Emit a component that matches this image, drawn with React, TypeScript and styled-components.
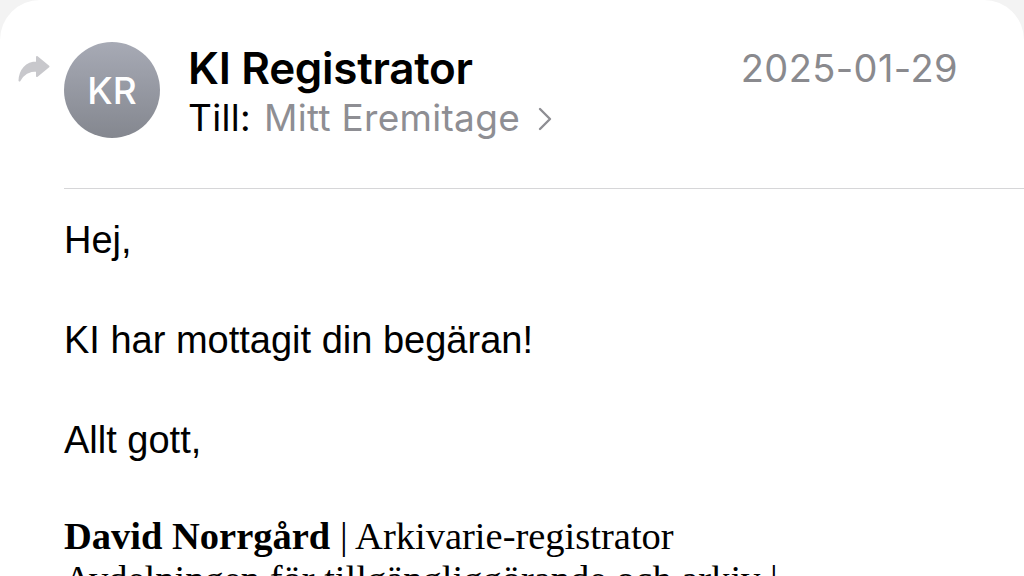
import React from 'react';
import styled, { createGlobalStyle } from 'styled-components';

const GlobalStyle = createGlobalStyle`
  html, body {
    margin: 0;
    padding: 0;
    background-color: #f3f3f3;
    overflow: hidden;
  }
`;

const StyledCard = styled.div`
  min-height: 576px;
  background-color: #ffffff;
  border-radius: 40px 40px 0 0;
  padding-top: 42px;
  box-sizing: border-box;
`;

const StyledHeader = styled.div`
  display: flex;
  align-items: flex-start;
  height: 96px;
  padding-left: 18px;
  padding-right: 66px;
`;

const StyledReplyIcon = styled.svg`
  width: 32px;
  height: 28px;
  margin-top: 13px;
  margin-right: 14px;
  flex-shrink: 0;
`;

const StyledAvatar = styled.div`
  width: 96px;
  height: 96px;
  border-radius: 50%;
  background: linear-gradient(180deg, #a7aab5 0%, #84878f 100%);
  display: flex;
  align-items: center;
  justify-content: center;
  color: #ffffff;
  font-family: Inter, 'Liberation Sans', sans-serif;
  font-weight: 500;
  font-size: 37px;
  flex-shrink: 0;
`;

const StyledSenderInfo = styled.div`
  flex: 1;
  margin-left: 28px;
  font-family: Inter, 'Liberation Sans', sans-serif;
`;

const StyledSenderName = styled.div`
  font-size: 44px;
  font-weight: 600;
  line-height: 52px;
  color: #000000;
  letter-spacing: -0.3px;
`;

const StyledRecipientRow = styled.div`
  display: flex;
  align-items: center;
  font-size: 37px;
  line-height: 48px;
  letter-spacing: 0.3px;
  color: #000000;
`;

const StyledRecipient = styled.span`
  color: #8e8e93;
  margin-left: 13px;
`;

const StyledChevron = styled.svg`
  width: 14px;
  height: 24px;
  margin-left: 18px;
  margin-top: 2px;
`;

const StyledDate = styled.div`
  font-family: Inter, 'Liberation Sans', sans-serif;
  font-size: 38px;
  line-height: 52px;
  letter-spacing: 0.4px;
  color: #8a8a8e;
`;

const StyledDivider = styled.div`
  height: 1px;
  margin-top: 50px;
  margin-left: 64px;
  background-color: #d6d6d8;
`;

const StyledBody = styled.div`
  padding: 26px 0 0 64px;
  font-family: 'Liberation Sans', Arial, sans-serif;
  font-size: 38px;
  line-height: 50px;
  color: #000000;
`;

const StyledParagraph = styled.p`
  margin: 0 0 50px 0;
`;

const StyledSignature = styled.div`
  font-family: 'Liberation Serif', 'Times New Roman', serif;
  font-size: 38.5px;
  line-height: 43px;
  color: #000000;
`;

const App: React.FunctionComponent = () => {
  return (
    <>
      <GlobalStyle />
      <StyledCard>
        <StyledHeader>
          <StyledReplyIcon viewBox="0 0 32 28">
            <path
              d="M19 2 L30.5 11.5 L19 21 L19 15.5 C11 15.5 5.5 18 1.5 25.5 C2 15 8 7.5 19 7.5 Z"
              fill="#c8c8cc"
              stroke="#c8c8cc"
              strokeWidth="2"
              strokeLinejoin="round"
            />
          </StyledReplyIcon>
          <StyledAvatar>KR</StyledAvatar>
          <StyledSenderInfo>
            <StyledSenderName>KI Registrator</StyledSenderName>
            <StyledRecipientRow>
              Till:
              <StyledRecipient>Mitt Eremitage</StyledRecipient>
              <StyledChevron viewBox="0 0 14 24">
                <path
                  d="M2 2 L12 12 L2 22"
                  fill="none"
                  stroke="#8e8e93"
                  strokeWidth="2.4"
                  strokeLinecap="round"
                  strokeLinejoin="round"
                />
              </StyledChevron>
            </StyledRecipientRow>
          </StyledSenderInfo>
          <StyledDate>2025-01-29</StyledDate>
        </StyledHeader>
        <StyledDivider />
        <StyledBody>
          <StyledParagraph>Hej,</StyledParagraph>
          <StyledParagraph>KI har mottagit din begäran!</StyledParagraph>
          <StyledParagraph>Allt gott,</StyledParagraph>
          <StyledSignature>
            <b>David Norrgård</b> | Arkivarie-registrator
            <br />
            Avdelningen för tillgängliggörande och arkiv |
          </StyledSignature>
        </StyledBody>
      </StyledCard>
    </>
  );
};

export default App;
